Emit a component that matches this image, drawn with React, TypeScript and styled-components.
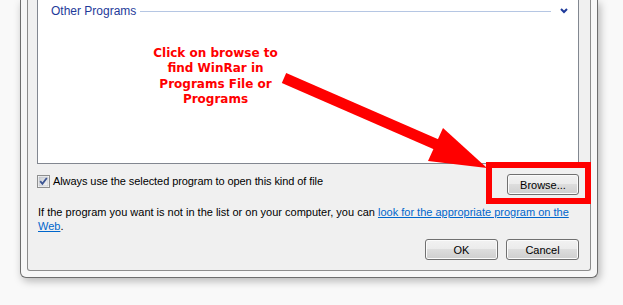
import React from "react";
import styled, { createGlobalStyle } from "styled-components";

const Global = createGlobalStyle`
  html, body {
    margin: 0;
    padding: 0;
    background: #f9f9f9;
    width: 623px;
    height: 305px;
    overflow: hidden;
  }
  #root {
    position: relative;
    width: 623px;
    height: 305px;
  }
`;

const uiFont = `"Liberation Sans", Arial, sans-serif`;

const Page = styled.div`
  position: relative;
  width: 623px;
  height: 305px;
  font-family: ${uiFont};
  font-size: 11px;
  color: #000;
`;

const Frame = styled.div`
  margin-left: 20px;
  width: 578px;
  box-sizing: border-box;
  border: 1px solid #6e6e6e;
  border-top: none;
  border-radius: 0 0 6px 6px;
  background: #f7f7f7;
  padding: 0 6px 6px;
  box-shadow: 2px 3px 9px rgba(0, 0, 0, 0.28);
`;

const Panel = styled.div`
  border: 1px solid #8c8c8c;
  border-top: none;
  border-radius: 0 0 3px 3px;
  background: #f0f0f0;
  padding: 0 11px 10px 9px;
  display: flex;
  flex-direction: column;
`;

const ListBox = styled.div`
  height: 164px;
  box-sizing: border-box;
  background: #ffffff;
  border: 1px solid #828790;
  border-top: none;
`;

const GroupHeader = styled.div`
  height: 22px;
  display: flex;
  align-items: center;
  padding: 0 10px 0 13px;
`;

const GroupTitle = styled.span`
  font-size: 12px;
  color: #1e3a9a;
  white-space: nowrap;
`;

const GroupRule = styled.div`
  flex: 1;
  height: 1px;
  background: #b5c6e3;
  margin: 0 9px 0 4px;
`;

const Chevron = styled.svg`
  width: 8px;
  height: 6px;
  display: block;
`;

const OptionRow = styled.div`
  margin-top: 10px;
  display: flex;
  justify-content: space-between;
  align-items: flex-start;
`;

const CheckLabel = styled.label`
  margin-top: 1px;
  display: flex;
  align-items: center;
  gap: 3px;
  line-height: 13px;
  white-space: nowrap;
  letter-spacing: -0.08px;
`;

const CheckBox = styled.svg`
  width: 13px;
  height: 13px;
  display: block;
`;

const Button = styled.button<{ $w?: number }>`
  width: ${(p) => p.$w ?? 73}px;
  height: 21px;
  box-sizing: border-box;
  padding: 0;
  border: 1px solid #707070;
  border-radius: 3px;
  background: linear-gradient(#f2f2f2 0%, #ebebeb 49%, #dddddd 50%, #cfcfcf 100%);
  box-shadow: inset 0 0 0 1px #fbfbfb;
  font-family: ${uiFont};
  font-size: 11px;
  color: #000;
`;

const Info = styled.p`
  margin: 10px 0 0 1px;
  line-height: 14px;
  white-space: nowrap;
`;

const Link = styled.a`
  color: #0066cc;
  text-decoration: underline;
`;

const ButtonRow = styled.div`
  margin-top: 6px;
  display: flex;
  justify-content: flex-end;
  gap: 8px;
`;

const Note = styled.div`
  position: absolute;
  left: 135px;
  top: 46px;
  width: 161px;
  text-align: center;
  font-family: "DejaVu Sans", Verdana, sans-serif;
  font-weight: bold;
  font-size: 12px;
  line-height: 15.3px;
  color: #ff0000;
`;

const Highlight = styled.div`
  position: absolute;
  left: 486px;
  top: 162px;
  width: 105px;
  height: 42px;
  box-sizing: border-box;
  border: 6px solid #ff0000;
`;

const Overlay = styled.svg`
  position: absolute;
  left: 0;
  top: 0;
  width: 623px;
  height: 305px;
  pointer-events: none;
`;

export default function App() {
  return (
    <Page>
      <Global />
      <Frame>
        <Panel>
          <ListBox>
            <GroupHeader>
              <GroupTitle>Other Programs</GroupTitle>
              <GroupRule />
              <Chevron viewBox="0 0 8 6">
                <path d="M1 1 L4 4 L7 1" fill="none" stroke="#1e3a9a" strokeWidth="2" />
              </Chevron>
            </GroupHeader>
          </ListBox>
          <OptionRow>
            <CheckLabel>
              <CheckBox viewBox="0 0 13 13">
                <defs>
                  <linearGradient id="cbg" x1="0" y1="0" x2="1" y2="1">
                    <stop offset="0" stopColor="#cbcfd5" />
                    <stop offset="1" stopColor="#f6f6f6" />
                  </linearGradient>
                </defs>
                <rect x="0.5" y="0.5" width="12" height="12" fill="#fdfdfd" stroke="#8e8f8f" />
                <rect x="2" y="2" width="9" height="9" fill="url(#cbg)" stroke="#b5b8c0" strokeWidth="0.6" />
                <path d="M3.2 6.2 L5.4 8.8 L9.8 3" fill="none" stroke="#3c5593" strokeWidth="1.8" />
              </CheckBox>
              Always use the selected program to open this kind of file
            </CheckLabel>
            <Button $w={72}>Browse...</Button>
          </OptionRow>
          <Info>
            If the program you want is not in the list or on your computer, you can{" "}
            <Link>look for the appropriate program on the</Link>
            <br />
            <Link>Web</Link>.
          </Info>
          <ButtonRow>
            <Button>OK</Button>
            <Button>Cancel</Button>
          </ButtonRow>
        </Panel>
      </Frame>

      <Note>
        Click on browse to
        <br />
        find WinRar in
        <br />
        Programs File or
        <br />
        Programs
      </Note>

      <Overlay viewBox="0 0 623 305">
        <line x1="284" y1="78" x2="440" y2="146" stroke="#ff0000" strokeWidth="11" />
        <polygon points="443,128 428,161 487,168" fill="#ff0000" />
      </Overlay>
      <Highlight />
    </Page>
  );
}
